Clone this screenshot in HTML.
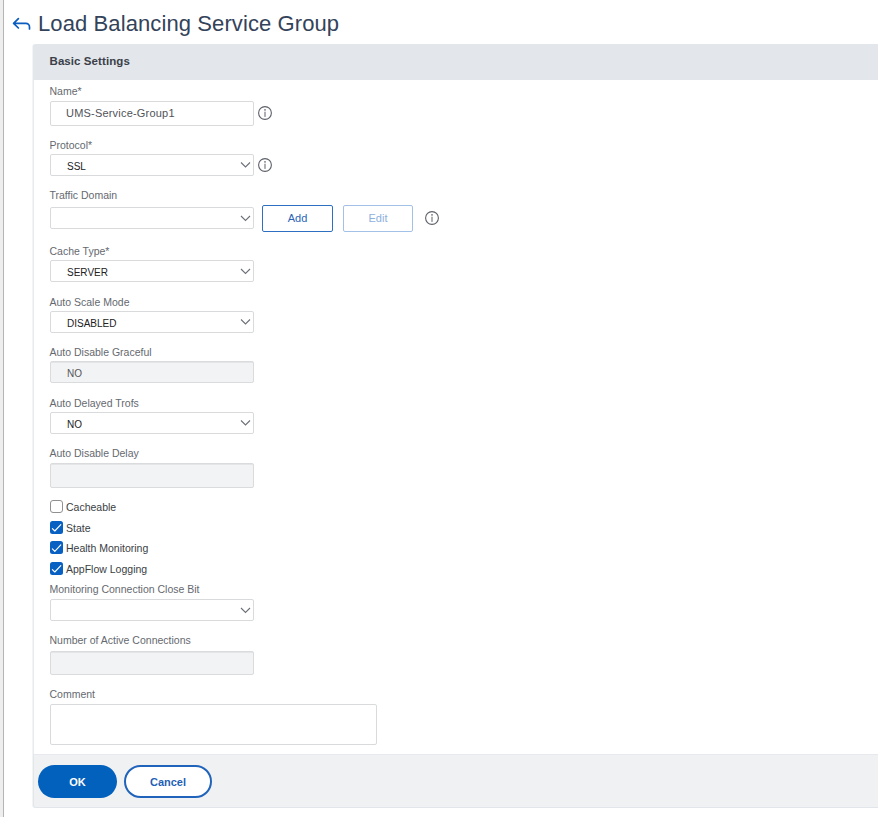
<!DOCTYPE html>
<html><head><meta charset="utf-8">
<style>
*{box-sizing:border-box;margin:0;padding:0}
html,body{width:878px;height:817px;overflow:hidden;background:#fff;font-family:"Liberation Sans",sans-serif}
.abs{position:absolute}
#strip{left:0;top:0;width:3px;height:817px;background:#eeeeee}
#strip2{left:3px;top:0;width:1px;height:817px;background:#b5b5b5}
#title{left:38px;top:10px;font-size:22px;line-height:28px;color:#33435a;letter-spacing:0.1px;white-space:nowrap}
#panel{left:32px;top:44px;width:860px;height:764px;border-left:1px solid #f3f4f6;box-shadow:inset 1px 0 0 #e8eaee;border-radius:3px;background:#fff}
#hdr{left:33px;top:44px;width:860px;height:36px;background:#e3e6ea;border-radius:3px 0 0 0}
#hdrt{left:49.5px;top:53px;font-size:11.5px;font-weight:bold;line-height:16px;color:#3a4049;letter-spacing:0.08px}
.lbl{position:absolute;left:49.5px;font-size:10.5px;line-height:13px;color:#65696f;white-space:nowrap}
.inp{position:absolute;left:50px;width:204px;border:1px solid #d9dadc;border-radius:2px;background:#fff}
.inp.dis{background:#f2f3f5;border-color:#dadbdd;box-shadow:inset 0 1px 0 #e4e5e7}
.val{position:absolute;left:16px;font-size:10px;color:#222;white-space:nowrap}
.chev{position:absolute;right:4px;top:50%;margin-top:-3px}
.info{position:absolute}
.btn{position:absolute;border:1px solid #2f6fc2;border-radius:2px;color:#2a64b7;font-size:11px;text-align:center;background:#fff}
.cb{position:absolute;left:50px;width:13px;height:13px;border-radius:2.5px;background:#0860c2}
.cbl{position:absolute;left:66px;font-size:10.5px;line-height:13px;color:#3a3e44;white-space:nowrap}
#footer{left:33px;top:754px;width:860px;height:54px;background:#f0f1f2;border-top:1px solid #e7e9ec;border-bottom:1px solid #e2e5e9;border-left:1px solid #e3e6e9;border-radius:0 0 0 3px}
#ok{left:38px;top:765px;width:79px;height:33px;border-radius:17px;background:#0361be;color:#fff;font-weight:bold;font-size:11px;line-height:35px;text-align:center}
#cancel{left:124px;top:765px;width:88px;height:33px;border-radius:17px;background:#fff;border:2px solid #1f63bb;color:#1f5fb5;font-weight:bold;font-size:11px;line-height:31px;text-align:center}
</style></head>
<body>
<div id="strip" class="abs"></div>
<div id="strip2" class="abs"></div>
<svg class="abs" style="left:0;top:0" width="40" height="40" viewBox="0 0 40 40"><path d="M18.4 18.6 L13.6 23.3 L18.4 28 M13.8 23.3 H25.9 A3.6 3.6 0 0 1 29.5 26.9 V29" fill="none" stroke="#0b5cc0" stroke-width="1.7" stroke-linecap="round" stroke-linejoin="round"/></svg>
<div id="title" class="abs">Load Balancing Service Group</div>

<div id="panel" class="abs"></div>
<div id="hdr" class="abs"></div>
<div id="hdrt" class="abs">Basic Settings</div>

<!-- Name -->
<div class="lbl" style="top:85px">Name*</div>
<div class="inp" style="top:101px;height:25px"><span class="val" style="top:5px;left:15px;font-size:11px;color:#4f5359;letter-spacing:0.2px">UMS-Service-Group1</span></div>

<!-- Protocol -->
<div class="lbl" style="top:139px">Protocol*</div>
<div class="inp" style="top:154px;height:22px"><span class="val" style="top:5.5px">SSL</span></div>

<!-- Traffic -->
<div class="lbl" style="top:189px">Traffic Domain</div>
<div class="inp" style="top:207px;height:22px"></div>
<div class="btn" style="left:262px;top:205px;width:71px;height:26.5px;line-height:25px">Add</div>
<div class="btn" style="left:343px;top:205px;width:70px;height:26.5px;line-height:25px;border-color:#a3c1e7;color:#8cb1de">Edit</div>

<!-- Cache -->
<div class="lbl" style="top:245px">Cache Type*</div>
<div class="inp" style="top:260px;height:22px"><span class="val" style="top:5.5px">SERVER</span></div>

<div class="lbl" style="top:296px">Auto Scale Mode</div>
<div class="inp" style="top:311px;height:22px"><span class="val" style="top:5.5px">DISABLED</span></div>

<div class="lbl" style="top:346px">Auto Disable Graceful</div>
<div class="inp dis" style="top:361px;height:22px"><span class="val" style="top:5.5px;color:#555">NO</span></div>

<div class="lbl" style="top:397px">Auto Delayed Trofs</div>
<div class="inp" style="top:412px;height:22px"><span class="val" style="top:5.5px">NO</span></div>

<div class="lbl" style="top:447px">Auto Disable Delay</div>
<div class="inp dis" style="top:463px;height:25px"></div>

<div class="cb" style="top:500.3px;background:#fff;border:1.6px solid #8f9092;border-radius:3px"></div>
<div class="cbl" style="top:500.6px">Cacheable</div>
<div class="cb" style="top:521px"></div>
<div class="cbl" style="top:521.6px">State</div>
<div class="cb" style="top:541px"></div>
<div class="cbl" style="top:541.6px">Health Monitoring</div>
<div class="cb" style="top:562px"></div>
<div class="cbl" style="top:562.6px">AppFlow Logging</div>

<div class="lbl" style="top:583px">Monitoring Connection Close Bit</div>
<div class="inp" style="top:599px;height:22px"></div>

<div class="lbl" style="top:634px">Number of Active Connections</div>
<div class="inp dis" style="top:651px;height:24px"></div>

<div class="lbl" style="top:688px">Comment</div>
<div class="inp" style="top:704px;height:41px;width:327px"></div>

<div id="footer" class="abs"></div>
<div id="ok" class="abs">OK</div>
<div id="cancel" class="abs">Cancel</div>
<svg class="abs" style="left:0;top:0;pointer-events:none" width="878" height="817"><path d="M241 162.5 L245.5 167 L250 162.5" fill="none" stroke="#6b7079" stroke-width="1.1"/><path d="M241 216.0 L245.5 220.5 L250 216.0" fill="none" stroke="#6b7079" stroke-width="1.1"/><path d="M241 269.0 L245.5 273.5 L250 269.0" fill="none" stroke="#6b7079" stroke-width="1.1"/><path d="M241 319.5 L245.5 324 L250 319.5" fill="none" stroke="#6b7079" stroke-width="1.1"/><path d="M241 420.5 L245.5 425 L250 420.5" fill="none" stroke="#6b7079" stroke-width="1.1"/><path d="M241 608.0 L245.5 612.5 L250 608.0" fill="none" stroke="#6b7079" stroke-width="1.1"/><circle cx="265" cy="113" r="6.4" fill="none" stroke="#5d6168" stroke-width="1.1"/><rect x="264.5" y="111.7" width="1" height="5.2" fill="#5d6168"/><circle cx="265" cy="109.9" r="0.8" fill="#5d6168"/><circle cx="265" cy="165" r="6.4" fill="none" stroke="#5d6168" stroke-width="1.1"/><rect x="264.5" y="163.7" width="1" height="5.2" fill="#5d6168"/><circle cx="265" cy="161.9" r="0.8" fill="#5d6168"/><circle cx="432" cy="218" r="6.4" fill="none" stroke="#5d6168" stroke-width="1.1"/><rect x="431.5" y="216.7" width="1" height="5.2" fill="#5d6168"/><circle cx="432" cy="214.9" r="0.8" fill="#5d6168"/><path d="M52.4 528.6 L54.8 531 L60.8 524.6" fill="none" stroke="#fff" stroke-width="1.15" stroke-linecap="round" stroke-linejoin="round"/><path d="M52.4 548.9 L54.8 551.3 L60.8 544.9" fill="none" stroke="#fff" stroke-width="1.15" stroke-linecap="round" stroke-linejoin="round"/><path d="M52.4 569.6 L54.8 572 L60.8 565.6" fill="none" stroke="#fff" stroke-width="1.15" stroke-linecap="round" stroke-linejoin="round"/></svg>
</body></html>
